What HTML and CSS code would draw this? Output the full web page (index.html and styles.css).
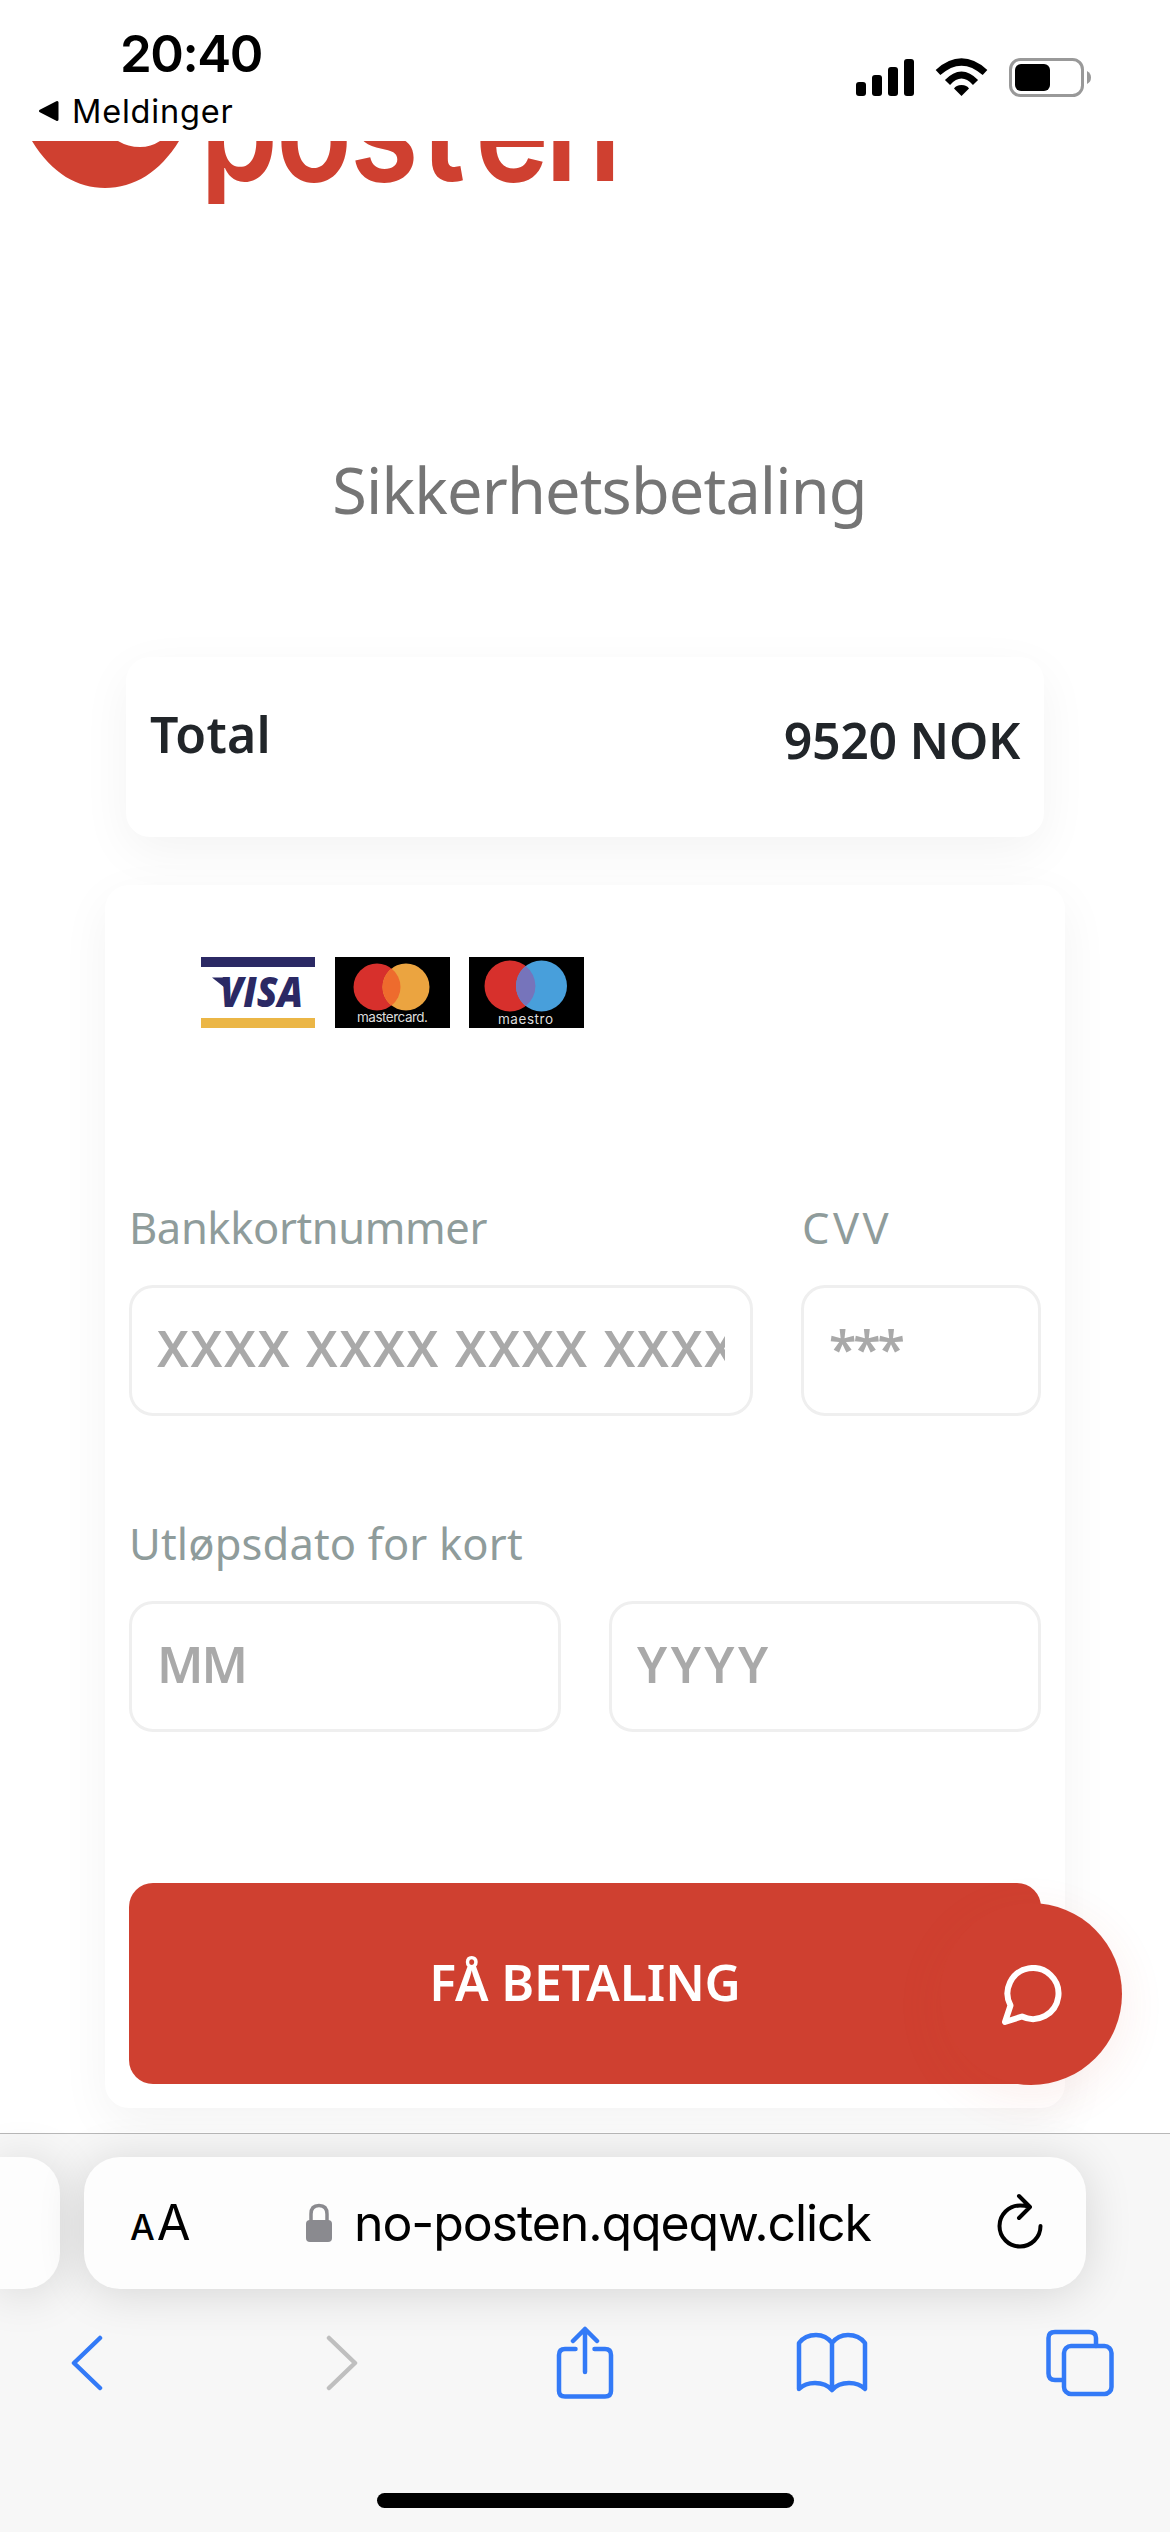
FILE: index.html
```html
<!DOCTYPE html>
<html lang="no">
<head>
<meta charset="utf-8">
<title>Sikkerhetsbetaling</title>
<link rel="stylesheet" href="styles.css">
</head>
<body>
<div class="phone">
  <header class="status">
    <div class="status-left">
      <div class="clock">20:40</div>
      <div class="return"><svg width="22" height="22" viewBox="0 0 22 22"><path d="M19 2.500V19.500L2.500 11Z" stroke="#000" stroke-width="3" stroke-linejoin="round"/></svg><span class="return-label">Meldinger</span></div>
    </div>
    <svg class="status-icons" width="236" height="40" viewBox="0 0 236 40">
      <rect x="0" y="24" width="10" height="14" rx="3"/>
      <rect x="16" y="17" width="10" height="21" rx="3"/>
      <rect x="32" y="9" width="10" height="29" rx="3"/>
      <rect x="48" y="1" width="10" height="37" rx="3"/>
      <path d="M105.500 38L98 30.500Q100 27 105.500 27Q111 27 113 30.500Z"/>
      <path d="M91.500 24.500Q105.500 9.500 119.500 24.500M82 14.500Q105.500-6.500 129 14.500" fill="none" stroke="#000" stroke-width="7"/>
      <rect x="154.500" y="1.500" width="72" height="36" rx="10" fill="none" stroke="#999" stroke-width="3"/>
      <rect x="159" y="6" width="35" height="27" rx="6"/>
      <path d="M231 13Q235 15 235 19.500T231 26Z" fill="#999"/>
    </svg>
  </header>

  <main class="page">
    <svg class="logo" width="640" height="63" viewBox="0 141 640 63">
      <path d="M32 141C52 174 78 188 105 188C134 188 160 172 179 141H160Q151 147 140 147Q128 147 118 141Z"/>
      <text class="wordmark" transform="translate(0 181) scale(1 1.16)" x="200 276 350 421 475 545">posten</text>
    </svg>

    <h1 class="title">Sikkerhetsbetaling</h1>

    <section class="card total">
      <span class="total-label">Total</span>
      <span class="total-sum">9520 NOK</span>
    </section>

    <section class="card payment">
      <div class="brands">
        <svg width="115" height="71" viewBox="0 0 115 71">
          <path d="M0 0H114V10H0Z" fill="#2b2964"/><path d="M0 61H114V71H0Z" fill="#ebb646"/>
          <path d="M11 20.500H24L28 34Z" fill="#2b2964"/>
          <text class="visa" x="19" y="50" textLength="83" lengthAdjust="spacingAndGlyphs">VISA</text>
        </svg>
        <svg width="115" height="71" viewBox="0 0 115 71">
          <path d="M0 0H115V71H0Z"/>
          <circle cx="42" cy="30" r="23.500" fill="#d7302c"/><circle cx="71" cy="30" r="23.500" fill="#eba440"/>
          <path d="M56.500 11.500A23.500 23.500 0 0 1 56.500 48.500A23.500 23.500 0 0 1 56.500 11.500Z" fill="#ee6b2d"/>
          <text class="brand-name" x="22" y="65" textLength="71">mastercard.</text>
        </svg>
        <svg width="115" height="71" viewBox="0 0 115 71">
          <path d="M0 0H115V71H0Z"/>
          <circle cx="41" cy="29" r="25.500" fill="#d7302c"/><circle cx="72.500" cy="29" r="25.500" fill="#489fdb"/>
          <path d="M56.750 9A25.500 25.500 0 0 1 56.750 49A25.500 25.500 0 0 1 56.750 9Z" fill="#7674bb"/>
          <text class="brand-name" x="29" y="67" textLength="55">maestro</text>
        </svg>
      </div>

      <div class="row card-row">
        <div class="field"><div class="label">Bankkortnummer</div><div class="box"><span class="hint number">XXXX XXXX XXXX XXXX</span></div></div>
        <div class="field"><div class="label cvv-label">CVV</div><div class="box"><span class="hint stars">***</span></div></div>
      </div>
      <div class="row date-row">
        <div class="field"><div class="label date-label">Utløpsdato for kort</div><div class="box"><span class="hint month">MM</span></div></div>
        <div class="field"><div class="label"></div><div class="box"><span class="hint year">YYYY</span></div></div>
      </div>

      <div class="submit">FÅ BETALING</div>
    </section>

    <div class="chat">
      <svg width="64" height="64" viewBox="0 0 64 64" fill="none" stroke="#fff" stroke-width="6" stroke-linejoin="round"><path d="M10.500 40.500A25.500 25.500 0 1 1 22 51.500L5 57Z"/></svg>
    </div>
  </main>

  <footer class="browser">
    <div class="tabs">
      <div class="tab previous"></div>
      <div class="tab address">
        <div class="reader"><span class="small-a">A</span><span class="big-a">A</span></div>
        <div class="host">
          <svg width="27" height="40" viewBox="0 0 27 40"><rect y="17" width="26" height="22" rx="4" fill="#8a8a8f"/><path d="M5 18V11Q5 2.500 13 2.500T21 11V18" fill="none" stroke="#8a8a8f" stroke-width="3.500"/></svg>
          <span class="host-name">no-posten.qqeqw.click</span>
        </div>
        <svg class="reload" width="46" height="56" viewBox="0 0 46 56" fill="none" stroke="#000" stroke-width="4" stroke-linecap="round" stroke-linejoin="round"><path d="M32 13.500Q28 12.500 23 12.500A20.500 20.500 0 1 0 43.500 33M22 3L33 14L22 25"/></svg>
      </div>
    </div>
    <nav class="tools">
      <svg width="34" height="56" viewBox="0 0 34 56"><path d="M30 3L4 28L30 53"/></svg>
      <svg class="forward" width="34" height="56" viewBox="0 0 34 56"><path d="M4 3L30 28L4 53"/></svg>
      <svg class="share" width="58" height="74" viewBox="0 0 58 74"><path d="M19.500 23H9Q3 23 3 29V65Q3 70.500 9 70.500H49Q55 70.500 55 65V29Q55 23 49 23H38.500M29 46V3M17 15L29 3L41 15"/></svg>
      <svg class="bookmarks" width="72" height="62" viewBox="0 0 72 62"><path d="M36 57V11Q30 3 20 3Q9 3 3 11V57Q9 51 19 51Q30 51 36 58Q42 51 53 51Q63 51 69 57V11Q63 3 52 3Q42 3 36 11"/></svg>
      <svg class="windows" width="68" height="68" viewBox="0 0 68 68"><path d="M17 51H9Q2.500 51 2.500 44.500V9Q2.500 3 9 3H43Q50 3 50 9V17"/><rect x="18" y="17" width="47.500" height="48" rx="7"/></svg>
    </nav>
    <div class="home"></div>
  </footer>
</div>
</body>
</html>
```

FILE: styles.css
```css
* { box-sizing: border-box; }
body { margin: 0; background: #fff; }
svg { display: block; flex: none; }
.phone {
  width: 1170px; height: 2532px; display: flex; flex-direction: column;
  overflow: hidden; background: #fff; white-space: nowrap;
  font-family: "Noto Sans", sans-serif;
}

.status {
  height: 141px; flex: none; display: flex; justify-content: space-between;
  padding: 23px 78px 0 38px; color: #000; font-family: Inter, sans-serif;
}
.clock { margin-left: 82px; font-size: 51px; line-height: 62px; font-weight: 600; letter-spacing: -1.5px; }
.return { display: flex; align-items: center; gap: 12px; height: 40px; margin-top: 6px; }
.return-label { font-size: 32.500px; letter-spacing: 0.8px; }
.status-icons { margin-top: 35px; }

.page { position: relative; height: 1991px; flex: none; display: flex; flex-direction: column; overflow: hidden; }
.logo { fill: #cf4030; }
.wordmark { font: 600 125px Inter, sans-serif; }
.title {
  margin: 246px 0 0 29px; height: 80px; font-size: 63px; line-height: 80px;
  font-weight: 400; text-align: center; color: #757575; letter-spacing: -0.85px;
}
.card { border-radius: 24px; background: #fff; box-shadow: 0 15px 50px rgba(0, 0, 0, .05); flex: none; }
.total {
  margin: 127px 126px 0; height: 180px; padding: 0 24px; display: flex; justify-content: space-between;
  font-size: 50px; line-height: 60px; font-weight: 600; color: #212529;
}
.total-label { padding-top: 47px; letter-spacing: .3px; }
.total-sum { padding-top: 53px; letter-spacing: -.3px; }

.payment { margin: 48px 105px 0; height: 1223px; padding: 72px 24px 24px; display: flex; flex-direction: column; }
.brands { display: flex; gap: 19px; margin-left: 72px; height: 71px; }
.visa { font: italic 800 42px "Open Sans", sans-serif; fill: #2b2964; }
.brand-name { font: 13.500px Inter, sans-serif; fill: #ddd; }

.row { display: grid; gap: 48px; }
.card-row { grid-template-columns: 624px 240px; margin-top: 170px; }
.date-row { grid-template-columns: 1fr 1fr; margin-top: 98px; }
.label { height: 60px; margin-bottom: 27px; font-size: 43.500px; line-height: 58px; color: #8f9c9b; letter-spacing: -.4px; }
.cvv-label { padding-left: 1px; letter-spacing: 3.500px; }
.date-label { letter-spacing: .15px; }
.box { height: 131px; padding: 0 25px 6px; display: flex; align-items: center; border: 3px solid #efefef; border-radius: 24px; }
.hint { width: 100%; overflow: hidden; font-size: 50px; line-height: 70px; font-weight: 600; color: #a9a9a9; }
.number { letter-spacing: 1.650px; }
.stars { letter-spacing: -3px; }
.month { letter-spacing: -2px; }
.year { letter-spacing: 3.500px; }

.submit {
  height: 201px; margin-top: auto; border-radius: 24px; background: #cf4030;
  color: #fff; font-size: 50px; line-height: 199px; font-weight: 600; text-align: center; letter-spacing: -.2px;
}
/* Floats over the corner of the payment card. */
.chat {
  position: absolute; right: 48px; bottom: 47px; width: 182px; height: 182px; border-radius: 50%;
  display: flex; align-items: center; justify-content: center; padding: 5px 0 0 2px; background: #cf4030;
  box-shadow: 0 12px 48px rgba(207, 64, 48, .09);
}

.browser {
  flex: 1; display: flex; flex-direction: column; align-items: center;
  border-top: 1px solid #b8b8b8; background: #f7f7f7; margin-top: 1px;
}
.tabs { width: 100%; display: flex; gap: 24px; margin-top: 23px; }
.tab { height: 132px; background: #fdfdfd; border-radius: 36px; box-shadow: 0 4px 48px rgba(0, 0, 0, .14); }
.previous { width: 60px; border-radius: 0 36px 36px 0; }
.address { width: 1002px; padding: 0 43px 0 46px; display: flex; align-items: center; font-family: Inter, sans-serif; }
.reader { display: flex; align-items: baseline; gap: 2px; width: 176px; padding-top: 4px; line-height: 60px; }
.small-a { font-size: 35px; font-weight: 500; }
.big-a { font-size: 49px; }
.host { display: flex; align-items: center; gap: 21px; }
.host svg { margin-top: -1px; }
.host-name { font-size: 50px; line-height: 60px; letter-spacing: -1.100px; }
.reload { margin: -5px 0 0 auto; }
.tools {
  width: 100%; height: 76px; margin-top: 36px; padding-left: 70px; display: flex; align-items: center;
  fill: none; stroke: #337af7; stroke-width: 4.500; stroke-linecap: round; stroke-linejoin: round;
}
.forward { margin-left: 221px; stroke: #bfbfbf; }
.share { margin-left: 197px; }
.bookmarks { margin-left: 182px; }
.windows { margin-left: 178px; }
.home { width: 417px; height: 15px; margin-top: 92px; border-radius: 8px; background: #000; }
```
